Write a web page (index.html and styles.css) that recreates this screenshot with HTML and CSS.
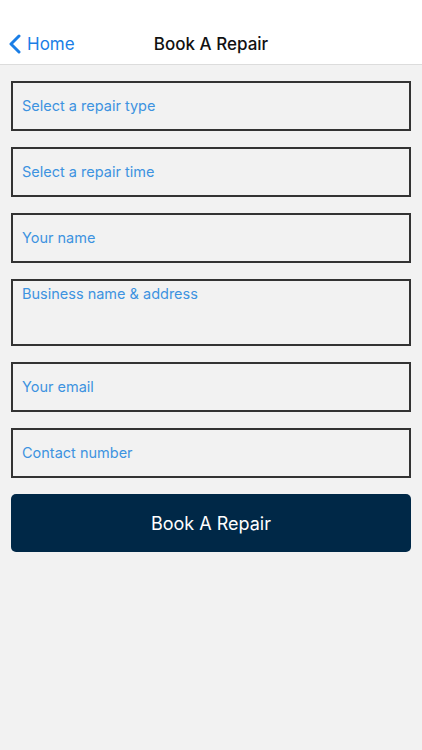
FILE: index.html
```html
<!DOCTYPE html>
<html lang="en">
<head>
    <meta charset="UTF-8">
    <meta name="viewport" content="width=device-width, initial-scale=1.0">
    <title>Book A Repair</title>
    <link rel="stylesheet" href="styles.css">
</head>
<body>
    <header class="navbar">
        <a class="back" href="#">
            <svg class="chevron" width="13" height="20" viewBox="0 0 13 20">
                <path d="M11 2 L3 10 L11 18" fill="none" stroke="#1a7ee6" stroke-width="3" stroke-linecap="round" stroke-linejoin="round"/>
            </svg>
            <span>Home</span>
        </a>
        <h1 class="title">Book A Repair</h1>
    </header>
    <form class="repair-form">
        <div class="field">Select a repair type</div>
        <div class="field">Select a repair time</div>
        <div class="field">Your name</div>
        <div class="field field-tall">Business name &amp; address</div>
        <div class="field">Your email</div>
        <div class="field">Contact number</div>
        <button type="submit" class="submit">Book A Repair</button>
    </form>
</body>
</html>
```

FILE: styles.css
```css
body {
    margin: 0;
    background-color: #f2f2f2;
    font-family: Inter, "Liberation Sans", sans-serif;
    height: 750px;
}
.navbar {
    position: relative;
    height: 65px;
    background-color: #fff;
    border-bottom: 1px solid #dcdcdc;
    display: flex;
    align-items: flex-end;
    justify-content: center;
    box-sizing: border-box;
    padding-bottom: 10px;
}
.back {
    position: absolute;
    left: 8px;
    bottom: 10px;
    display: flex;
    align-items: center;
    gap: 6px;
    color: #1a7ee6;
    text-decoration: none;
    font-size: 17px;
}
.title {
    margin: 0;
    font-size: 17px;
    font-weight: 500;
    color: #111;
}
.repair-form {
    display: flex;
    flex-direction: column;
    gap: 16px;
    padding: 16px 11px;
}
.field {
    height: 50px;
    box-sizing: border-box;
    border: 2px solid #333;
    padding: 0 9px 2px;
    display: flex;
    align-items: center;
    color: #3d93e0;
    font-size: 14.5px;
}
.field-tall {
    height: 67px;
    align-items: flex-start;
    padding-top: 4px;
}
.submit {
    height: 58px;
    border: none;
    border-radius: 5px;
    background-color: #002847;
    color: #fff;
    font-family: inherit;
    font-size: 18px;
    cursor: pointer;
}
```
